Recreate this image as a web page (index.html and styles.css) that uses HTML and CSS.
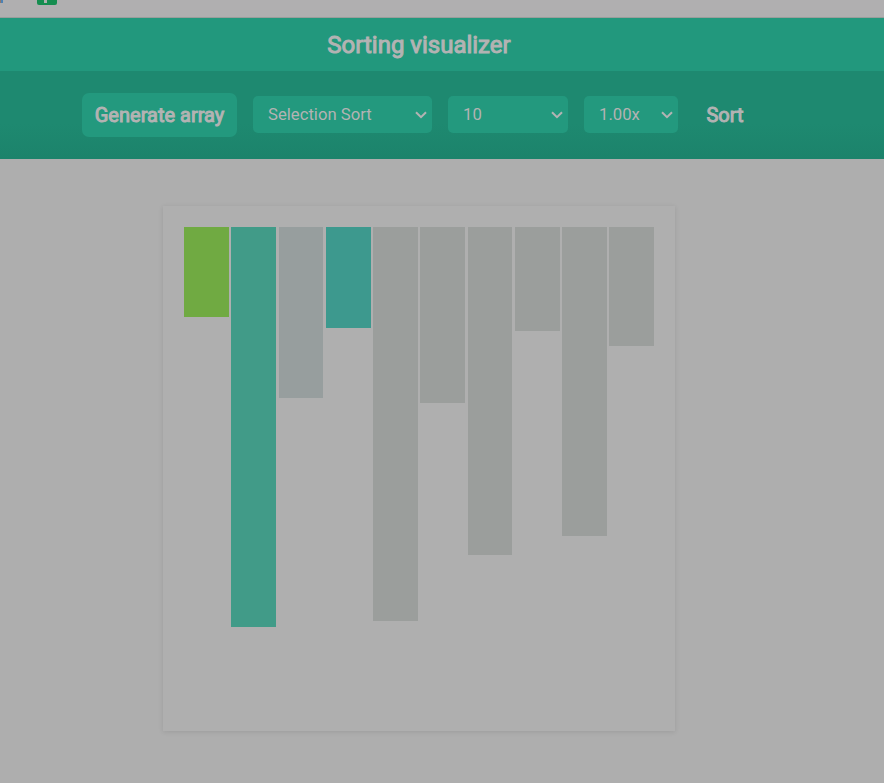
FILE: index.html
```html
<!DOCTYPE html>
<html lang="en">
<head>
<meta charset="utf-8">
<title>Sorting visualizer</title>
<link rel="stylesheet" href="styles.css">
</head>
<body>
<div class="browser-strip"><span class="tab-mark"></span><span class="tab-icon"></span></div>
<header class="title-bar"><h1>Sorting visualizer</h1></header>
<nav class="controls">
  <button class="btn generate">Generate array</button>
  <div class="select algorithm"><span>Selection Sort</span><svg viewBox="0 0 12 8"><path d="M1 1.2 6 6.2 11 1.2"/></svg></div>
  <div class="select size"><span>10</span><svg viewBox="0 0 12 8"><path d="M1 1.2 6 6.2 11 1.2"/></svg></div>
  <div class="select speed"><span>1.00x</span><svg viewBox="0 0 12 8"><path d="M1 1.2 6 6.2 11 1.2"/></svg></div>
  <button class="btn sort">Sort</button>
</nav>
<main class="board">
  <div class="bar done" style="height:90px"></div>
  <div class="bar current" style="height:400px"></div>
  <div class="bar visited" style="height:171px"></div>
  <div class="bar compare" style="height:101px"></div>
  <div class="bar" style="height:394px"></div>
  <div class="bar" style="height:176px"></div>
  <div class="bar" style="height:328px"></div>
  <div class="bar" style="height:104px"></div>
  <div class="bar" style="height:309px"></div>
  <div class="bar" style="height:119px"></div>
</main>
</body>
</html>
```
FILE: styles.css
```css
* { box-sizing: border-box; }
body {
  margin: 0;
  height: 783px;
  overflow: hidden;
  background: #aeaeae;
  color: #b3b3b3;
  font-family: Roboto, sans-serif;
}
.browser-strip {
  height: 18px;
  display: flex;
  align-items: flex-start;
  background: #b0afb0;
  border-bottom: 1px solid #999d9b;
}
.tab-mark { width: 3px; height: 3px; background: linear-gradient(90deg, #8c7770 1px, #4c82b5 1px); }
.tab-icon {
  width: 20px;
  height: 5px;
  margin-left: 34px;
  border-radius: 0 0 2px 2px;
  background: linear-gradient(#b0b0b0, #b0b0b0) 7px 0 / 3px 3px no-repeat, #168d50;
}
.title-bar {
  height: 53px;
  padding: 1px 46px 0 0;
  display: flex;
  align-items: center;
  justify-content: center;
  background: #22987d;
}
h1 { margin: 0; font-size: 24px; line-height: 30px; font-weight: 400; -webkit-text-stroke: 1px; white-space: nowrap; }
.controls {
  height: 88px;
  padding-left: 82px;
  display: flex;
  align-items: center;
  gap: 16px;
  background: linear-gradient(#1e8970 60%, #1c836b);
}
.btn {
  border: 0;
  padding: 0;
  height: 44px;
  border-radius: 7px;
  color: inherit;
  font: 400 20px/24px Roboto, sans-serif;
  -webkit-text-stroke: 1px;
  white-space: nowrap;
}
.generate { width: 155px; background: #23997e; }
.sort { width: 62px; background: none; }
.select {
  height: 37px;
  margin-top: -1px;
  padding: 0 5px 0 15px;
  display: flex;
  align-items: center;
  justify-content: space-between;
  border-radius: 5px;
  background: #23997e;
  font-size: 16.7px;
}
.select span { padding-bottom: 1px; }
.select svg { width: 12px; height: 8px; fill: none; stroke: #b3b3b3; stroke-width: 2; }
.algorithm { width: 179px; }
.size { width: 120px; }
.speed { width: 94px; }
.board {
  width: 512px;
  height: 525px;
  margin: 47px 0 0 163px;
  padding: 21px 20.9px 0 21.2px;
  display: flex;
  align-items: flex-start;
  justify-content: space-between;
  background: #afafaf;
  box-shadow: 0 1px 5px rgba(0, 0, 0, 0.1);
}
.bar { width: 44.75px; background: #9b9e9c; }
.done { background: #70aa42; }
.current { background: #419b88; }
.visited { background: #979e9e; }
.compare { background: #3d998e; }
```
